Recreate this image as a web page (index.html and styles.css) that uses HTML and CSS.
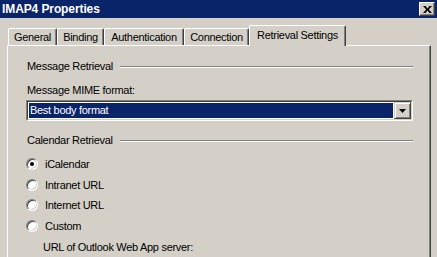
FILE: index.html
```html
<!DOCTYPE html>
<html lang="en">
<head>
    <meta charset="UTF-8">
    <title>IMAP4 Properties</title>
    <link rel="stylesheet" href="styles.css">
</head>
<body>
    <div class="titlebar">
        <span class="title">IMAP4 Properties</span>
        <span class="close-btn">
            <svg width="9" height="7" viewBox="0 0 9 7"><path d="M0 0h2.5l2 2.4 2-2.4H9L5.8 3.5 9 7H6.5l-2-2.4-2 2.4H0l3.2-3.5z" fill="#000"/></svg>
        </span>
    </div>

    <div class="tabs">
        <div class="tab tab-general">General</div>
        <div class="tab tab-binding">Binding</div>
        <div class="tab tab-auth">Authentication</div>
        <div class="tab tab-connection">Connection</div>
        <div class="tab tab-retrieval active">Retrieval Settings</div>
    </div>

    <div class="panel">
        <!-- Message Retrieval -->
        <div class="group-head">
            <span>Message Retrieval</span>
            <span class="etch"></span>
        </div>
        <div class="field-label">Message MIME format:</div>
        <div class="combo">
            <div class="combo-inner">
                <div class="combo-value">Best body format</div>
                <div class="combo-btn">
                    <svg width="7" height="4" viewBox="0 0 7 4"><path d="M0 0h7L3.5 4z" fill="#000"/></svg>
                </div>
            </div>
        </div>

        <!-- Calendar Retrieval -->
        <div class="group-head calendar-head">
            <span>Calendar Retrieval</span>
            <span class="etch"></span>
        </div>
        <div class="radio-list">
            <div class="radio-row"><span class="radio checked"></span>iCalendar</div>
            <div class="radio-row"><span class="radio"></span>Intranet URL</div>
            <div class="radio-row"><span class="radio"></span>Internet URL</div>
            <div class="radio-row"><span class="radio"></span>Custom</div>
        </div>
        <div class="sub-label">URL of Outlook Web App server:</div>
    </div>
</body>
</html>
```

FILE: styles.css
```css
body {
    margin: 0;
    width: 437px;
    height: 257px;
    overflow: hidden;
    background-color: #d4d0c8;
    font-family: 'Liberation Sans', Arial, sans-serif;
    font-size: 11px;
    letter-spacing: -0.3px;
    color: #000;
}

/* Заголовок окна */
.titlebar {
    height: 18px;
    background-color: #0a246a;
    display: flex;
    align-items: center;
    justify-content: space-between;
    padding: 0 2px;
}

.title {
    color: #fff;
    font-weight: bold;
    font-size: 12px;
    letter-spacing: -0.1px;
    line-height: 18px;
}

.close-btn {
    width: 16px;
    height: 14px;
    box-sizing: border-box;
    border: 1px solid;
    border-color: #fff #404040 #404040 #fff;
    box-shadow: inset -1px -1px #808080;
    background-color: #d4d0c8;
    display: flex;
    align-items: center;
    justify-content: center;
}

/* Вкладки */
.tabs {
    display: flex;
    align-items: flex-end;
    height: 20px;
    margin-top: 7px;
    padding-left: 8px;
}

.tab {
    box-sizing: border-box;
    height: 17px;
    padding-top: 1px;
    line-height: 15px;
    text-align: center;
    border-top: 1px solid #fff;
    border-left: 1px solid #fff;
    border-right: 1px solid #404040;
    box-shadow: inset -1px 0 #808080;
    border-radius: 2px 2px 0 0;
}

.tab-general { width: 49px; }
.tab-binding { width: 47px; }
.tab-auth { width: 80px; }
.tab-connection { width: 65px; }
.tab-retrieval { width: 97px; }

.tab.active {
    height: 21px;
    padding-top: 2px;
    margin-bottom: -1px;
    position: relative;
    z-index: 1;
    background-color: #d4d0c8;
}

/* Панель вкладки */
.panel {
    box-sizing: border-box;
    width: 424px;
    height: 212px;
    margin-left: 7px;
    padding: 14px 17px 0 19px;
    border-top: 1px solid #fff;
    border-left: 1px solid #fff;
    border-right: 1px solid #404040;
    box-shadow: inset -1px 0 #808080;
}

.group-head {
    display: flex;
    align-items: center;
    line-height: 13px;
}

.etch {
    flex: 1;
    margin-left: 7px;
    border-top: 1px solid #808080;
    border-bottom: 1px solid #fff;
}

.field-label {
    line-height: 13px;
    margin-top: 11px;
}

/* Выпадающий список */
.combo {
    box-sizing: border-box;
    height: 21px;
    margin-top: 3px;
    margin-left: -1px;
    border: 1px solid;
    border-color: #808080 #fff #fff #808080;
}

.combo-inner {
    height: 100%;
    box-sizing: border-box;
    display: flex;
    border: 1px solid;
    border-color: #404040 #d4d0c8 #d4d0c8 #404040;
    background-color: #fff;
}

.combo-value {
    flex: 1;
    margin: 1px;
    padding-left: 1px;
    line-height: 15px;
    background-color: #0a246a;
    color: #fff;
}

.combo-btn {
    width: 17px;
    height: 17px;
    box-sizing: border-box;
    border: 1px solid;
    border-color: #d4d0c8 #404040 #404040 #d4d0c8;
    box-shadow: inset 1px 1px #fff, inset -1px -1px #808080;
    background-color: #d4d0c8;
    display: flex;
    align-items: center;
    justify-content: center;
}

.calendar-head {
    margin-top: 13px;
}

/* Переключатели */
.radio-list {
    margin-top: 7px;
}

.radio-row {
    display: flex;
    align-items: center;
    height: 20.6px;
}

.radio {
    width: 12px;
    height: 12px;
    box-sizing: border-box;
    margin-left: -1px;
    margin-right: 7px;
    border-radius: 50%;
    border: 1px solid;
    border-color: #808080 #fff #fff #808080;
    box-shadow: inset 1px 1px #404040, inset -1px -1px #d4d0c8;
    background-color: #fff;
    display: flex;
    align-items: center;
    justify-content: center;
}

.radio.checked::after {
    content: '';
    width: 4px;
    height: 4px;
    border-radius: 50%;
    background-color: #000;
}

.sub-label {
    line-height: 13px;
    margin-top: 5px;
    margin-left: 16px;
}
```
